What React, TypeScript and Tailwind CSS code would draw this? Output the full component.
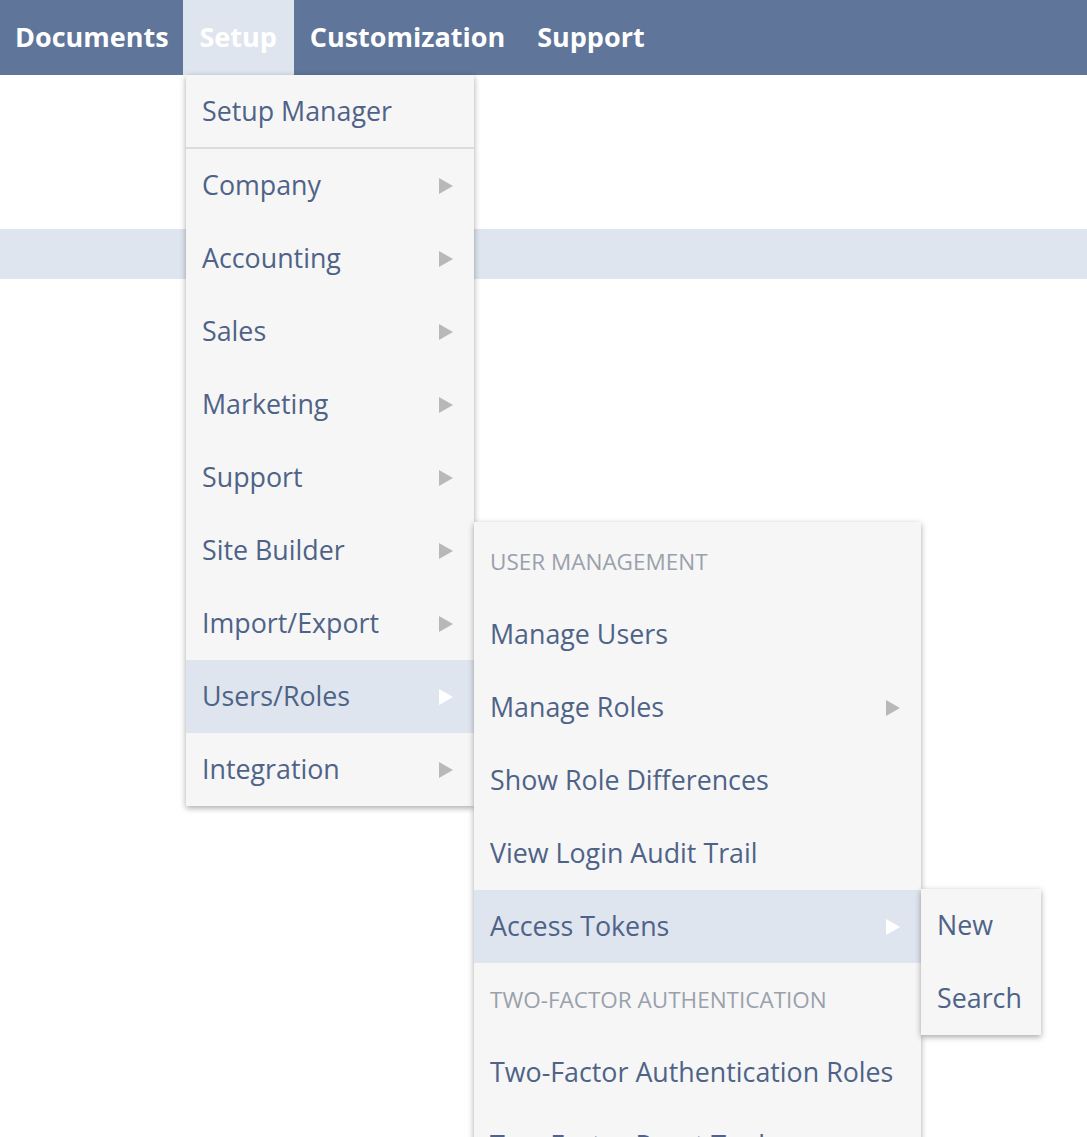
const font = { fontFamily: '"Open Sans", "Noto Sans", sans-serif' };

function Arrow({ white }: { white?: boolean }) {
  return (
    <svg width="16" height="18" viewBox="0 0 16 18" className="shrink-0">
      <path d="M1 1 L15 9 L1 17 Z" fill={white ? '#ffffff' : '#b8b8b8'} />
    </svg>
  );
}

function Row({ label, arrow, active, header }: { label: string; arrow?: boolean; active?: boolean; header?: boolean }) {
  return (
    <div
      className={`flex h-[73px] items-center justify-between pl-[16px] pr-[20px] ${active ? 'bg-[#dfe5ef]' : ''}`}
    >
      <span
        className={
          header
            ? 'text-[22.5px] uppercase text-[#9aa1ab]'
            : 'text-[26.8px] text-[#4e6387]'
        }
      >
        {label}
      </span>
      {arrow && <Arrow white={active} />}
    </div>
  );
}

export default function App() {
  const main = ['Company', 'Accounting', 'Sales', 'Marketing', 'Support', 'Site Builder', 'Import/Export'];
  return (
    <div className="relative h-[1137px] w-full overflow-hidden bg-white" style={font}>
      <nav className="flex h-[75px] items-stretch bg-[#5f7599] pl-[15px] text-[27px] font-bold text-white">
        <div className="flex items-center pr-[14px]">Documents</div>
        <div className="flex w-[111px] items-center justify-center bg-[#dfe5ef]">Setup</div>
        <div className="flex items-center px-[16px]">Customization</div>
        <div className="flex items-center px-[16px]">Support</div>
      </nav>
      <div className="mt-[154px] h-[50px] bg-[#dfe5ef]" />

      <div className="absolute left-[186px] top-[75px] w-[288px] bg-[#f6f6f6] shadow-[0_2px_6px_rgba(0,0,0,0.35)]">
        <div className="flex h-[72px] items-center pl-[16px] text-[26.8px] text-[#4e6387]">Setup Manager</div>
        <div className="h-[2px] bg-[#dcdcdc]" />
        {main.map((m) => (
          <Row key={m} label={m} arrow />
        ))}
        <Row label="Users/Roles" arrow active />
        <Row label="Integration" arrow />
      </div>

      <div className="absolute left-[474px] top-[522px] w-[447px] bg-[#f6f6f6] pt-[3px] shadow-[0_2px_6px_rgba(0,0,0,0.35)]">
        <Row label="User Management" header />
        <Row label="Manage Users" />
        <Row label="Manage Roles" arrow />
        <Row label="Show Role Differences" />
        <Row label="View Login Audit Trail" />
        <Row label="Access Tokens" arrow active />
        <Row label="Two-Factor Authentication" header />
        <Row label="Two-Factor Authentication Roles" />
        <Row label="Two-Factor Reset Tool" />
      </div>

      <div className="absolute left-[921px] top-[889px] w-[120px] bg-[#f6f6f6] shadow-[0_2px_6px_rgba(0,0,0,0.35)]">
        <Row label="New" />
        <Row label="Search" />
      </div>
    </div>
  );
}
